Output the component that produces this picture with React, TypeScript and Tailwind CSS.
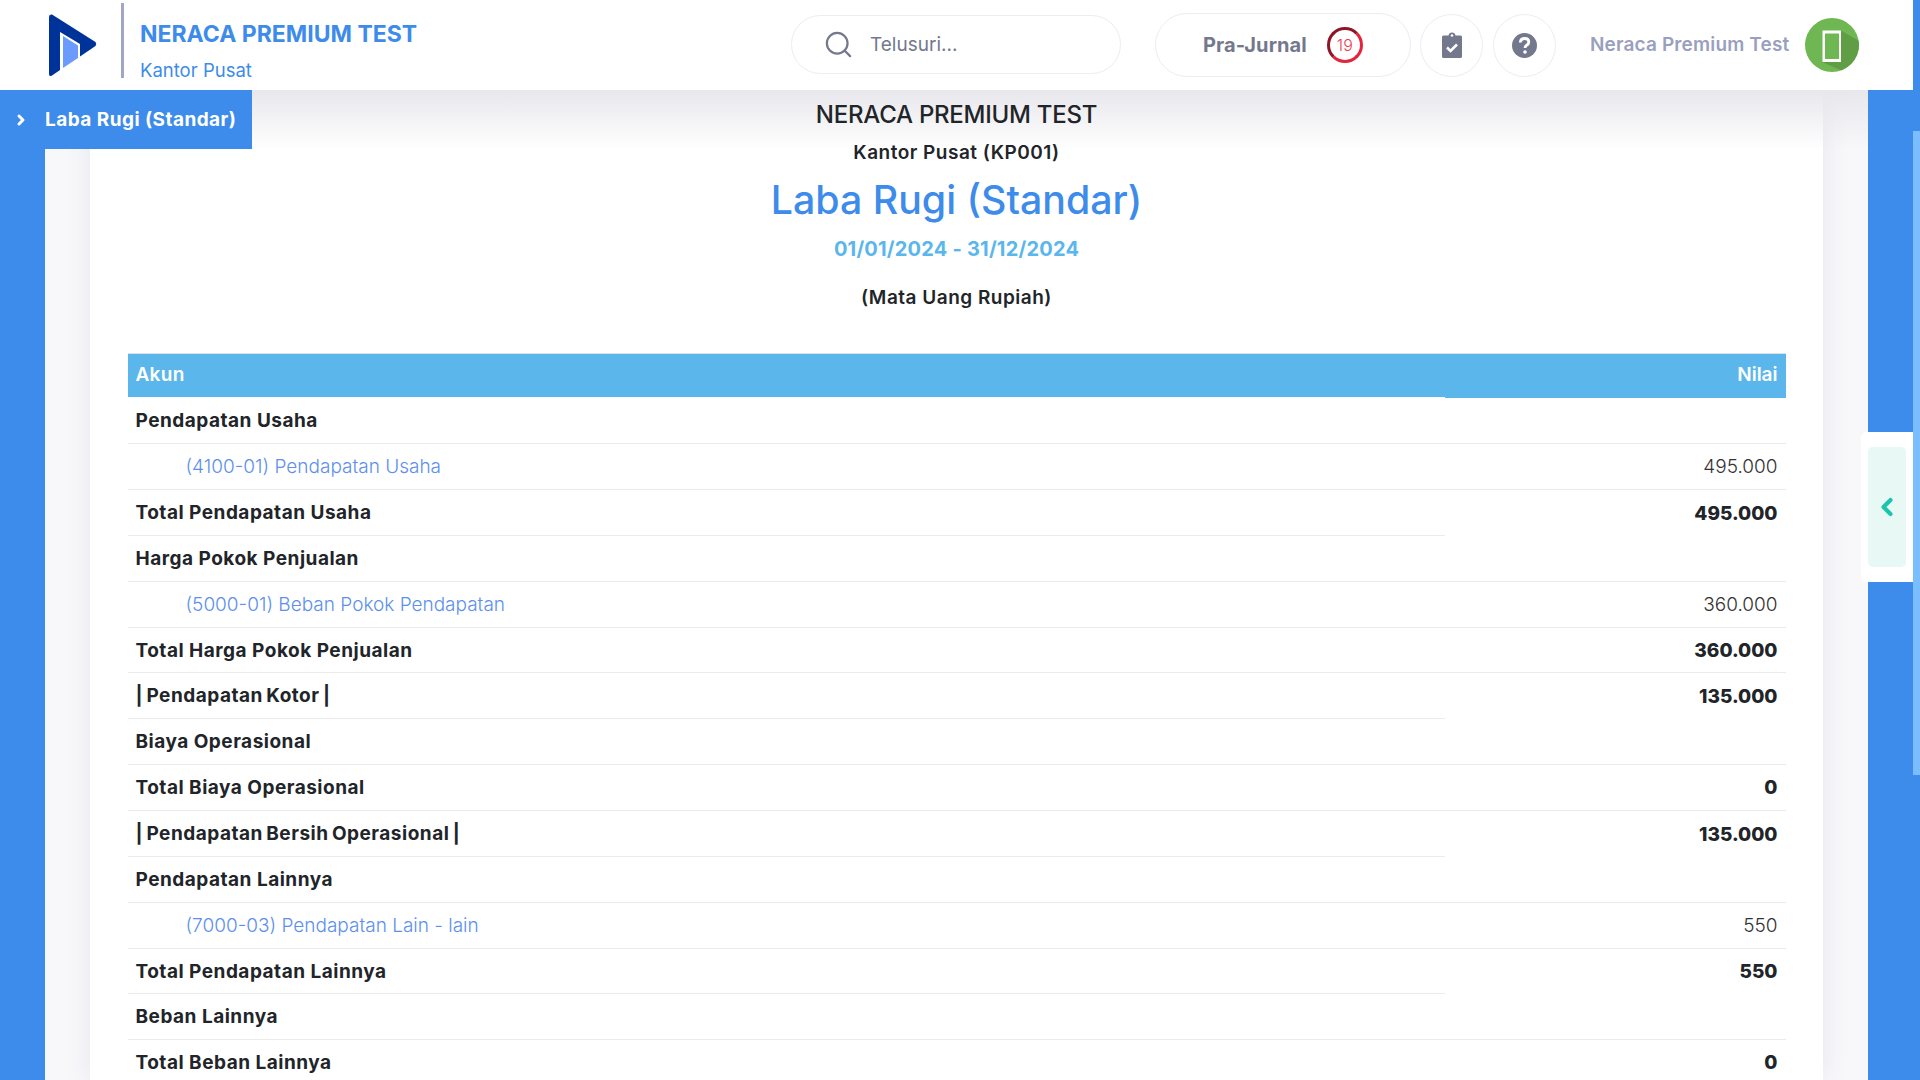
import { ChevronLeft, ChevronRight, Search } from 'lucide-react'

type Row = {
  label: string
  value?: string
  kind: 'head' | 'account' | 'total'
  // a few rows only have the rule under the first column
  shortLine?: boolean
  h?: string
}

const rows: Row[] = [
  { label: 'Pendapatan Usaha', kind: 'head' },
  { label: '(4100-01) Pendapatan Usaha', value: '495.000', kind: 'account' },
  { label: 'Total Pendapatan Usaha', value: '495.000', kind: 'total', shortLine: true },
  { label: 'Harga Pokok Penjualan', kind: 'head' },
  { label: '(5000-01) Beban Pokok Pendapatan', value: '360.000', kind: 'account' },
  { label: 'Total Harga Pokok Penjualan', value: '360.000', kind: 'total', h: 'h-[45px]' },
  { label: '| Pendapatan Kotor |', value: '135.000', kind: 'total', shortLine: true },
  { label: 'Biaya Operasional', kind: 'head' },
  { label: 'Total Biaya Operasional', value: '0', kind: 'total' },
  { label: '| Pendapatan Bersih Operasional |', value: '135.000', kind: 'total', shortLine: true },
  { label: 'Pendapatan Lainnya', kind: 'head' },
  { label: '(7000-03) Pendapatan Lain - lain', value: '550', kind: 'account' },
  { label: 'Total Pendapatan Lainnya', value: '550', kind: 'total', shortLine: true, h: 'h-[45px]' },
  { label: 'Beban Lainnya', kind: 'head' },
  { label: 'Total Beban Lainnya', value: '0', kind: 'total' },
]

function Logo() {
  return (
    <svg className="w-[48px] h-[63px]" viewBox="0 0 48 63">
      <path d="M3 0.500 L46.500 28 Q48 30 46.500 32 L3 61.500 Q0 63 0 60 V3 Q0 0 3 0.500Z" fill="#003399" />
      <path d="M11 18 L31 30 V45 L11 57Z" fill="#ffffff" />
      <path d="M14 22 L29 31.500 V44 L14 54Z" fill="#6b9bff" />
    </svg>
  )
}

function Header() {
  return (
    <header className="h-[90px] w-[1913px] bg-white flex items-center shrink-0 relative z-20">
      <div className="ml-[49px] w-[48px] flex items-center"><Logo /></div>
      <div className="ml-[24px] w-[3px] h-[75px] self-start mt-[3px] bg-[#a3a5c6]" />
      <div className="ml-[16px] w-[651px] h-[90px] pt-[20px]">
        <div className="text-[23px] leading-[28px] font-bold text-[#3d8bea]">NERACA PREMIUM TEST</div>
        <div className="text-[18.500px] leading-[24px] mt-[10px] text-[#3d8bea]">Kantor Pusat</div>
      </div>
      <div className="w-[330px] h-[59px] mb-[2px] rounded-full border border-[#ebedf3] flex items-center pl-[31px]">
        <Search className="w-[31px] h-[31px] text-[#74788d]" strokeWidth={1.7} />
        <span className="ml-[16px] mt-[2px] text-[19px] text-[#74788d]">Telusuri...</span>
      </div>
      <div className="ml-[34px] w-[256px] h-[64px] rounded-full border border-[#ebedf3] flex items-center pl-[47px]">
        <span className="text-[20px] font-bold text-[#74788d] tracking-[0.1px]">Pra-Jurnal</span>
        <span className="ml-[20px] w-[36px] h-[36px] rounded-full border-[3px] border-[#e3243b] border-l-[#8d1524] border-t-[#8d1524] flex items-center justify-center text-[16px] font-light text-[#ef3a50]">19</span>
      </div>
      <div className="ml-[9px] w-[63px] h-[63px] rounded-full border border-[#ebedf3] flex items-center justify-center">
        <svg className="w-[20px] h-[26px]" viewBox="0 0 20 26">
          <path d="M1.500 3.500 H6.500 Q7 0.500 10 0.500 Q13 0.500 13.500 3.500 H18.500 Q20 3.500 20 5 V24.500 Q20 26 18.500 26 H1.500 Q0 26 0 24.500 V5 Q0 3.500 1.500 3.500Z" fill="#74788d" />
          <circle cx="10" cy="3.500" r="1.300" fill="#ffffff" />
          <path d="M5 15.500 L8.500 19 L15 12.500" fill="none" stroke="#ffffff" strokeWidth="2.600" />
        </svg>
      </div>
      <div className="ml-[10px] w-[63px] h-[63px] rounded-full border border-[#ebedf3] flex items-center justify-center">
        <svg className="w-[25px] h-[25px]" viewBox="0 0 25 25">
          <circle cx="12.500" cy="12.500" r="12.500" fill="#74788d" />
          <path d="M8.300 9.500 Q8.500 5.500 12.700 5.500 Q16.800 5.500 16.800 9 Q16.800 11 14.600 12.200 Q13 13.100 13 15" fill="none" stroke="#ffffff" strokeWidth="2.800" />
          <circle cx="13" cy="19" r="1.800" fill="#ffffff" />
        </svg>
      </div>
      <span className="ml-[34px] w-[200px] whitespace-nowrap text-[19px] font-semibold tracking-[0.15px] text-[#9a9fbf]">Neraca Premium Test</span>
      <div className="ml-[15px] w-[54px] h-[54px] rounded-full bg-[#6fb752] overflow-hidden">
        <svg className="w-[54px] h-[54px]" viewBox="0 0 54 54">
          <path d="M36 12.500 L54 23 V42 L40 54 L17 44Z" fill="#5f9e45" />
          <rect x="17.500" y="12.500" width="18.500" height="31.500" fill="#ffffff" />
          <rect x="20" y="15.500" width="14" height="25.500" fill="#6fb752" />
        </svg>
      </div>
    </header>
  )
}

function ReportTable() {
  return (
    <div className="mt-[43px] w-[1658px] mx-auto text-[19px] text-[#212529]">
      <div className="flex h-[45px] border-t border-[#dee2e6]">
        <div className="w-[1317px] h-[43px] bg-[#5ab6eb] text-white font-semibold leading-[41px] px-[8px] tracking-[0.3px]">Akun</div>
        <div className="flex-1 h-[44px] bg-[#5ab6eb] text-white font-semibold leading-[41px] px-[8px] text-right">Nilai</div>
      </div>
      {rows.map((r) => (
        <div key={r.label} className={`flex ${r.h ?? 'h-[46px]'} items-center`}>
          <div className={`w-[1317px] h-full flex items-center border-b border-[#ebebeb] px-[8px] pt-[2px] ${r.kind === 'account' ? 'pl-[58px] text-[#5c8fee] font-light' : 'font-bold tracking-[0.5px]'} ${r.label.startsWith('|') ? '[word-spacing:-1.6px]' : ''}`}>
            {r.label}
          </div>
          <div className={`flex-1 h-full flex items-center justify-end px-[8px] pt-[2px] ${r.shortLine ? '' : 'border-b border-[#ebebeb]'} ${r.kind === 'account' ? 'font-light text-[#333333]' : 'font-extrabold'}`}>
            {r.value}
          </div>
        </div>
      ))}
    </div>
  )
}

export default function App() {
  return (
    <div className="w-[1920px] h-[1080px] overflow-hidden bg-[#3d8bea] relative font-['Inter','Liberation_Sans',sans-serif]">
      <Header />

      {/* scrollbar */}
      <div className="absolute right-0 top-[131px] w-[7px] h-[644px] bg-[#7bbeff]" />

      <div className="mx-[45px] w-[1823px] h-[990px] bg-[#f8f8fb] px-[45px]">
        <div className="bg-white h-full pt-[9px] shadow-[0_0_25px_rgba(82,63,105,0.1)]">
          {/* shade under the header, below the title text */}
          <div className="absolute left-0 top-[90px] w-[1868px] h-[60px] bg-gradient-to-b from-[#e8e7ec] to-transparent" />
          <div className="relative text-center text-[#212529]">
            <div className="text-[24px] leading-[32px] font-medium tracking-[-0.25px]">NERACA PREMIUM TEST</div>
            <div className="text-[19px] leading-[24px] mt-[10px] font-semibold tracking-[0.5px]">Kantor Pusat (KP001)</div>
            <div className="text-[39.300px] leading-[50px] mt-[10px] font-medium text-[#3d8bea]">Laba Rugi (Standar)</div>
            <div className="text-[20px] leading-[26px] mt-[11px] font-bold tracking-[0.2px] text-[#5ab6eb]">01/01/2024 - 31/12/2024</div>
            <div className="text-[19px] leading-[24px] mt-[24px] font-semibold tracking-[0.5px]">(Mata Uang Rupiah)</div>
          </div>
          <div className="relative">
            <ReportTable />
          </div>
        </div>
      </div>

      {/* report tab */}
      <div className="absolute left-0 top-[90px] w-[252px] h-[59px] bg-[#3d8bea] flex items-center text-white">
        <ChevronRight className="ml-[13px] w-[16px] h-[16px]" strokeWidth={4.5} />
        <span className="ml-[16px] mt-[2px] text-[19px] font-bold tracking-[0.45px] whitespace-nowrap">Laba Rugi (Standar)</span>
      </div>

      {/* side handle */}
      <div className="absolute left-[1861px] top-[432px] w-[52px] h-[150px] bg-white rounded-l-[6px] flex items-center pl-[7px]">
        <div className="w-[38px] h-[120px] bg-[#e8f8f5] rounded-[5px] flex items-center justify-center">
          <ChevronLeft className="w-[28px] h-[28px] text-[#1bc5ac]" strokeWidth={3.5} />
        </div>
      </div>
    </div>
  )
}
